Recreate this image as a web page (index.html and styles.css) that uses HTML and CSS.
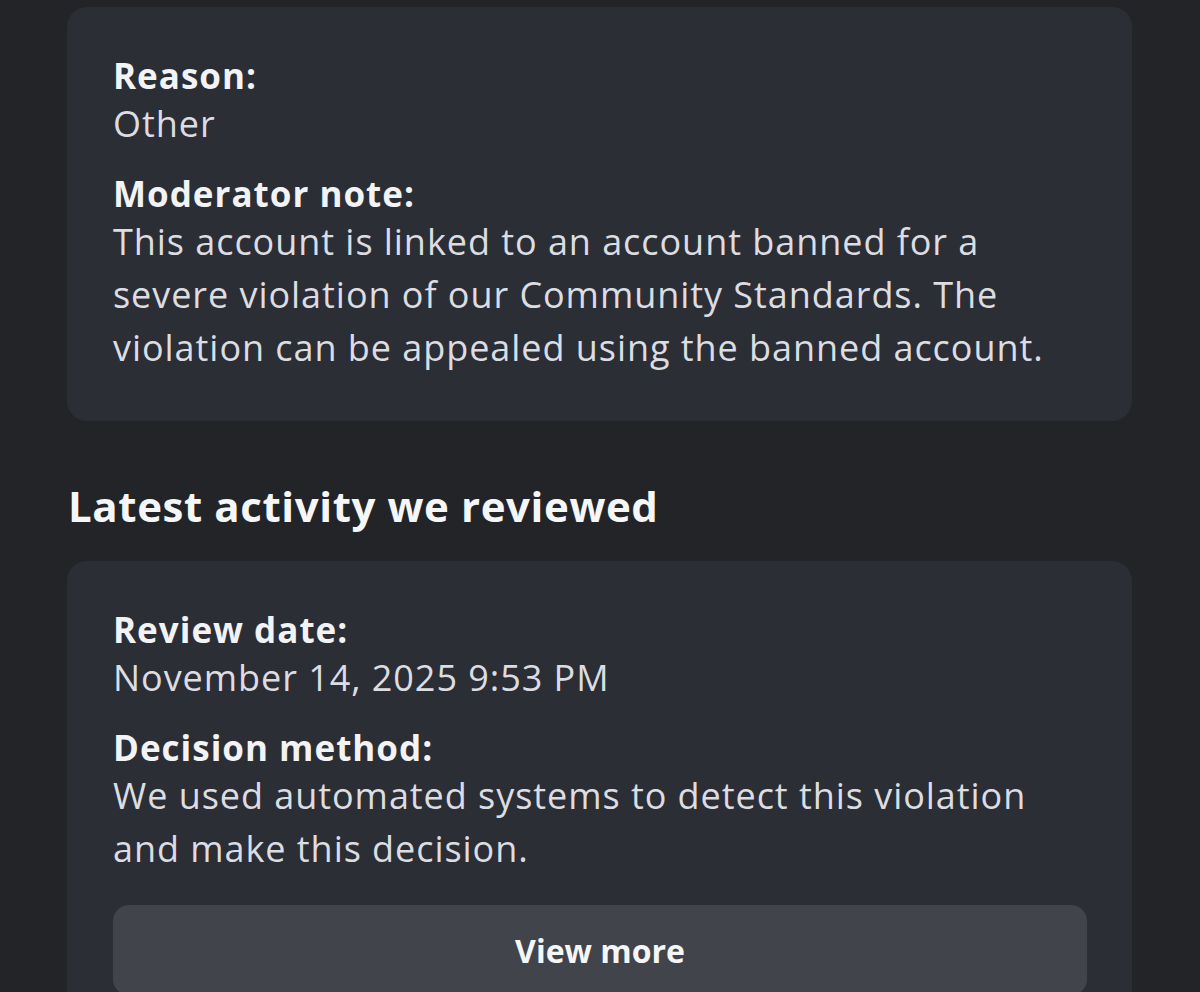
FILE: index.html
```html
<!DOCTYPE html>
<html lang="en">
<head>
<meta charset="utf-8">
<title>Account status</title>
<link rel="stylesheet" href="styles.css">
</head>
<body>
<main class="page">
  <section class="card card-first">
    <div class="field">
      <div class="label">Reason:</div>
      <div class="value">Other</div>
    </div>
    <div class="field">
      <div class="label">Moderator note:</div>
      <div class="value">This account is linked to an account banned for a severe violation of our Community Standards. The violation can be appealed using the banned account.</div>
    </div>
  </section>

  <h2 class="heading">Latest activity we reviewed</h2>

  <section class="card">
    <div class="field">
      <div class="label">Review date:</div>
      <div class="value">November 14, 2025 9:53 PM</div>
    </div>
    <div class="field">
      <div class="label">Decision method:</div>
      <div class="value">We used automated systems to detect this violation and make this decision.</div>
    </div>
    <button class="btn" type="button">View more</button>
  </section>
</main>
</body>
</html>
```

FILE: styles.css
```css
html, body {
  margin: 0;
  padding: 0;
  background: #232428;
  height: 100%;
  overflow: hidden;
}

body {
  font-family: "Open Sans", "Noto Sans", sans-serif;
  color: #e4e6eb;
}

.page {
  width: 1065px;
  margin-left: 67px;
  padding-top: 7px;
  display: flex;
  flex-direction: column;
}

.card {
  background: #2c2e35;
  border-radius: 20px;
  padding: 47px 45px 45px 46px;
  display: flex;
  flex-direction: column;
  gap: 22px;
}

.card-first {
  padding-bottom: 47px;
}

.field {
  display: flex;
  flex-direction: column;
}

.label {
  font-size: 35px;
  font-weight: 700;
  line-height: 43px;
  letter-spacing: 1px;
  color: #f2f3f5;
}

.value {
  font-size: 36px;
  font-weight: 400;
  line-height: 53px;
  letter-spacing: 0.95px;
  color: #dcdde2;
}

.heading {
  margin: 57px 0 27px 1px;
  font-size: 42px;
  line-height: 56px;
  font-weight: 700;
  letter-spacing: 0.6px;
  color: #f5f6f8;
}

.btn {
  margin-top: 8px;
  height: 90px;
  border: none;
  border-radius: 16px;
  background: #42444c;
  color: #f5f6f8;
  font-family: "Open Sans", "Noto Sans", sans-serif;
  font-size: 32px;
  font-weight: 700;
  cursor: pointer;
}
```
